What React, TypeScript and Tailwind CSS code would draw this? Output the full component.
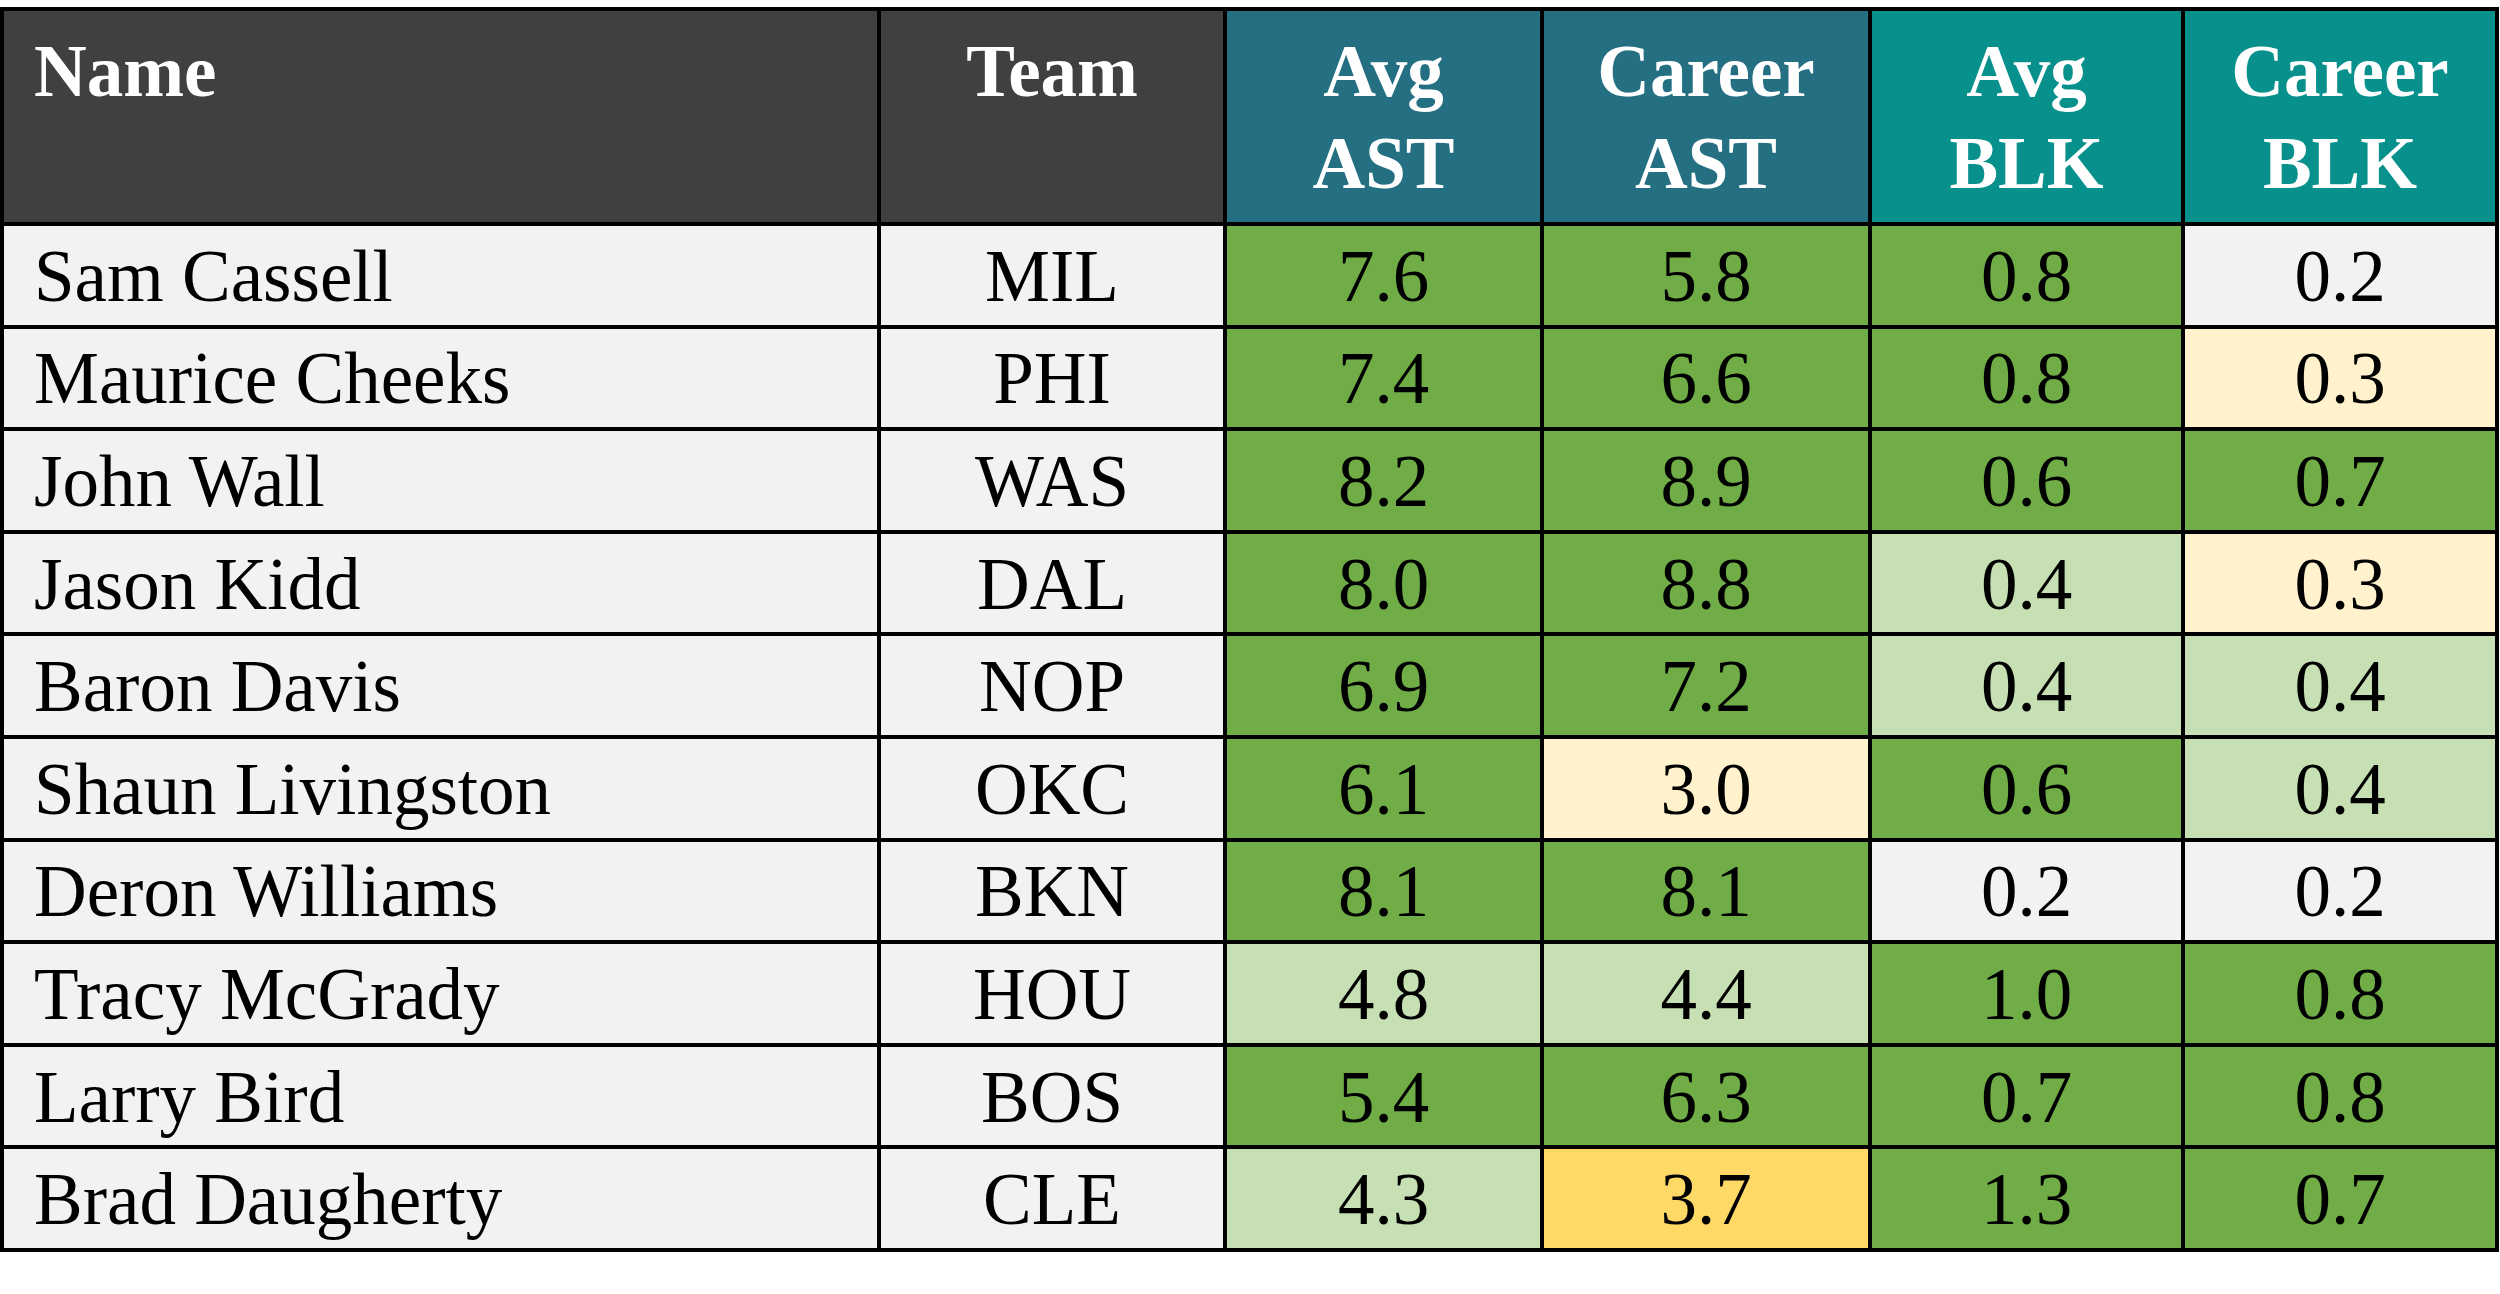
import { Fragment } from "react"

const G = "bg-[#70ad47]"
const L = "bg-[#c6e0b4]"
const Y = "bg-[#fff2cc]"
const O = "bg-[#ffd966]"
const W = "bg-[#f2f2f2]"

type Stat = [string, string]

const players: { name: string; team: string; stats: Stat[] }[] = [
    { name: "Sam Cassell", team: "MIL", stats: [["7.6", G], ["5.8", G], ["0.8", G], ["0.2", W]] },
    { name: "Maurice Cheeks", team: "PHI", stats: [["7.4", G], ["6.6", G], ["0.8", G], ["0.3", Y]] },
    { name: "John Wall", team: "WAS", stats: [["8.2", G], ["8.9", G], ["0.6", G], ["0.7", G]] },
    { name: "Jason Kidd", team: "DAL", stats: [["8.0", G], ["8.8", G], ["0.4", L], ["0.3", Y]] },
    { name: "Baron Davis", team: "NOP", stats: [["6.9", G], ["7.2", G], ["0.4", L], ["0.4", L]] },
    { name: "Shaun Livingston", team: "OKC", stats: [["6.1", G], ["3.0", Y], ["0.6", G], ["0.4", L]] },
    { name: "Deron Williams", team: "BKN", stats: [["8.1", G], ["8.1", G], ["0.2", W], ["0.2", W]] },
    { name: "Tracy McGrady", team: "HOU", stats: [["4.8", L], ["4.4", L], ["1.0", G], ["0.8", G]] },
    { name: "Larry Bird", team: "BOS", stats: [["5.4", G], ["6.3", G], ["0.7", G], ["0.8", G]] },
    { name: "Brad Daugherty", team: "CLE", stats: [["4.3", L], ["3.7", O], ["1.3", G], ["0.7", G]] },
]

const headers = [
    { label: ["Avg", "AST"], bg: "bg-[#246f82]" },
    { label: ["Career", "AST"], bg: "bg-[#246f82]" },
    { label: ["Avg", "BLK"], bg: "bg-[#08908d]" },
    { label: ["Career", "BLK"], bg: "bg-[#08908d]" },
]

const App = () => {
    return (
        <div className="w-[2500px] h-[1294px] bg-white pt-[7px]">
            <div
                className="w-[2499px] grid grid-cols-[873px_342px_313px_324px_309px_310px] grid-rows-[211px_repeat(10,98.6px)] gap-[4px] p-[4px] bg-black text-[73px] leading-[92px]"
                style={{ fontFamily: '"Liberation Serif", "Times New Roman", serif' }}
            >
                <div className="bg-[#404040] text-white font-bold pl-[30px] pt-[15px]">Name</div>
                <div className="bg-[#404040] text-white font-bold text-center pt-[15px]">Team</div>
                {headers.map((h, i) => (
                    <div key={i} className={`${h.bg} text-white font-bold text-center pt-[15px]`}>
                        <div>{h.label[0]}</div>
                        <div>{h.label[1]}</div>
                    </div>
                ))}
                {players.map((p) => (
                    <Fragment key={p.name}>
                        <div className={`${W} text-black flex items-center pl-[30px] pt-[3px] whitespace-nowrap`}>
                            {p.name}
                        </div>
                        <div className={`${W} text-black flex items-center justify-center pt-[3px]`}>
                            {p.team}
                        </div>
                        {p.stats.map(([v, bg], i) => (
                            <div key={i} className={`${bg} text-black flex items-center justify-center pt-[3px]`}>
                                {v}
                            </div>
                        ))}
                    </Fragment>
                ))}
            </div>
        </div>
    )
}

export default App
